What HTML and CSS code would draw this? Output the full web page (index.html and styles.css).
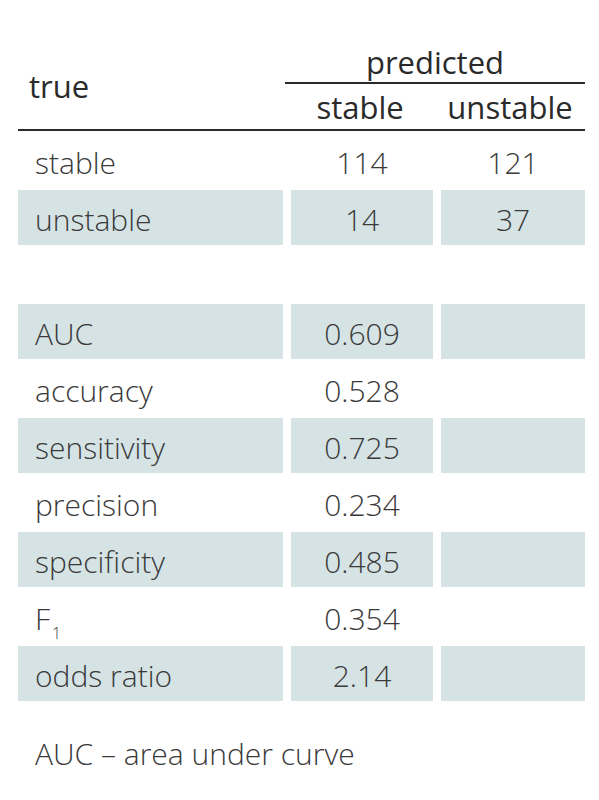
FILE: index.html
```html
<!DOCTYPE html>
<html lang="en">
<head>
<meta charset="utf-8">
<title>Confusion matrix</title>
<link rel="stylesheet" href="styles.css">
</head>
<body>
<div class="page">
  <div class="head">
    <div class="h-true">true</div>
    <div class="h-pred">predicted</div>
    <div class="h-sub">stable</div>
    <div class="h-sub">unstable</div>
  </div>
  <div class="body">
    <div class="c lbl">stable</div><div class="c num">114</div><div class="c num">121</div>
    <div class="c lbl sh">unstable</div><div class="c num sh">14</div><div class="c num sh">37</div>
    <div class="c lbl"></div><div class="c num"></div><div class="c num"></div>
    <div class="c lbl sh">AUC</div><div class="c num sh">0.609</div><div class="c num sh"></div>
    <div class="c lbl">accuracy</div><div class="c num">0.528</div><div class="c num"></div>
    <div class="c lbl sh">sensitivity</div><div class="c num sh">0.725</div><div class="c num sh"></div>
    <div class="c lbl">precision</div><div class="c num">0.234</div><div class="c num"></div>
    <div class="c lbl sh">specificity</div><div class="c num sh">0.485</div><div class="c num sh"></div>
    <div class="c lbl"><span>F<sub class="sub">1</sub></span></div><div class="c num">0.354</div><div class="c num"></div>
    <div class="c lbl sh">odds ratio</div><div class="c num sh">2.14</div><div class="c num sh"></div>
  </div>
  <div class="foot">AUC – area under curve</div>
</div>
</body>
</html>
```
FILE: styles.css
```css
html, body {
  margin: 0;
  padding: 0;
  background: #ffffff;
}
.page {
  padding: 41px 0 0 18px;
  width: 567px;
  font-family: "Open Sans", "Noto Sans", sans-serif;
  font-weight: 300;
  color: #3a3a3a;
  font-size: 30px;
}
.head {
  display: grid;
  grid-template-columns: 267px 150px 150px;
  grid-template-rows: 43px 45px;
  border-bottom: 2px solid #2a2a2a;
  font-size: 31px;
  font-weight: 400;
  color: #2a2a2a;
}
.h-true {
  grid-row: 1 / 3;
  grid-column: 1;
  display: flex;
  align-items: center;
  padding-left: 11px;
  padding-top: 2px;
}
.h-pred {
  grid-row: 1;
  grid-column: 2 / 4;
  border-bottom: 2px solid #2a2a2a;
  display: flex;
  align-items: center;
  justify-content: center;
}
.h-sub {
  display: flex;
  align-items: center;
  justify-content: center;
}
.body {
  display: grid;
  grid-template-columns: 265px 142px 144px;
  column-gap: 8px;
  row-gap: 2px;
  padding-top: 2px;
  grid-auto-rows: 55px;
}
.c {
  display: flex;
  align-items: center;
  padding-top: 3px;
  box-sizing: border-box;
}
.lbl {
  padding-left: 17px;
}
.num {
  justify-content: center;
}
.sh {
  background: #d5e3e5;
}
.sub {
  font-size: 16px;
  vertical-align: -9px;
  line-height: 0;
  margin-left: 2px;
}
.foot {
  margin-top: 32px;
  padding-left: 17px;
}
```
